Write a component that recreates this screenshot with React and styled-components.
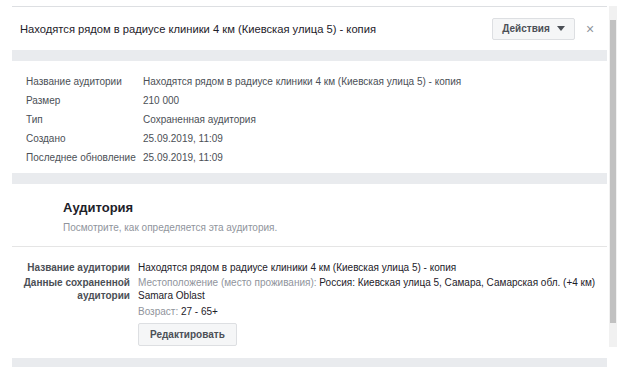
import React from "react";
import styled, { createGlobalStyle } from "styled-components";

const Global = createGlobalStyle`
  html, body { margin: 0; padding: 0; background: #fff; }
  body { font-family: "Liberation Sans", Arial, sans-serif; color: #1d2129; }
`;

const Page = styled.div`
  display: flex;
  align-items: flex-start;
  padding: 6px 0 0 12px;
`;

const Modal = styled.div`
  width: 595px;
  background: #e9ebee;
  border-top: 1px solid #dddfe2;
  display: flex;
  flex-direction: column;
  gap: 11px;
  padding-bottom: 9px;
`;

const Header = styled.div`
  height: 43px;
  background: #fff;
  display: flex;
  align-items: center;
  padding: 0 11px 0 8px;
  gap: 11px;
`;

const Title = styled.div`
  flex: 1;
  font-size: 11.2px;
  color: #1d2129;
  white-space: nowrap;
`;

const ActionButton = styled.button`
  height: 22px;
  width: 83px;
  padding: 0 8px;
  background: #f5f6f7;
  border: 1px solid #dddfe2;
  border-radius: 2px;
  font-family: inherit;
  font-weight: bold;
  font-size: 10px;
  color: #4b4f56;
  display: flex;
  align-items: center;
  justify-content: center;
  gap: 7px;
`;

const Close = styled.span`
  font-size: 14px;
  color: #90949c;
  width: 10px;
  line-height: 1;
`;

const Card = styled.div`
  background: #fff;
`;

const InfoTable = styled.div`
  display: grid;
  grid-template-columns: 117px 1fr;
  padding: 11px 14px 6px;
  font-size: 10px;
  line-height: 19px;
  color: #4b4f56;
`;

const AudHead = styled.div`
  padding: 16px 51px 0;
  height: 46px;
  border-bottom: 1px solid #e5e5e5;
`;

const AudTitle = styled.div`
  font-weight: bold;
  font-size: 13px;
  color: #1d2129;
  line-height: 16px;
`;

const AudSub = styled.div`
  font-size: 10px;
  color: #90949c;
  margin-top: 6px;
`;

const DetailGrid = styled.div`
  display: grid;
  grid-template-columns: 118px 1fr;
  column-gap: 8px;
  padding: 14px 0 10px;
  font-size: 10px;
  line-height: 13px;
`;

const DLabel = styled.div`
  text-align: right;
  font-weight: bold;
  color: #4b4f56;
  margin-bottom: 2px;
`;

const DValue = styled.div`
  color: #1d2129;
  margin-bottom: 2px;
`;

const Muted = styled.span`
  color: #90949c;
`;

const Line = styled.div`
  margin-top: ${(p) => p.$mt || 0}px;
  white-space: nowrap;
`;

const EditButton = styled.button`
  margin-top: 5px;
  height: 23px;
  padding: 0 11px;
  background: #f5f6f7;
  border: 1px solid #dddfe2;
  border-radius: 2px;
  font-family: inherit;
  font-weight: bold;
  font-size: 10px;
  color: #4b4f56;
`;

const Scrollbar = styled.div`
  margin-left: 2px;
  width: 8px;
  height: 341px;
  background: #f1f1f1;
  display: flex;
  flex-direction: column;
  align-items: center;
  padding-top: 14px;
  box-sizing: border-box;
`;

const Thumb = styled.div`
  width: 6px;
  height: 303px;
  background: #c1c1c1;
`;

const title = "Находятся рядом в радиусе клиники 4 км (Киевская улица 5) - копия";

const info = [
  ["Название аудитории", title],
  ["Размер", "210 000"],
  ["Тип", "Сохраненная аудитория"],
  ["Создано", "25.09.2019, 11:09"],
  ["Последнее обновление", "25.09.2019, 11:09"],
];

export default function App() {
  return (
    <>
      <Global />
      <Page>
        <Modal>
          <Header>
            <Title>{title}</Title>
            <ActionButton>
              Действия
              <svg width="8" height="5" viewBox="0 0 8 5">
                <path d="M0 0h8L4 5z" fill="#4b4f56" />
              </svg>
            </ActionButton>
            <Close>×</Close>
          </Header>
          <Card>
            <InfoTable>
              {info.map(([k, v]) => (
                <React.Fragment key={k}>
                  <div>{k}</div>
                  <div>{v}</div>
                </React.Fragment>
              ))}
            </InfoTable>
          </Card>
          <Card>
            <AudHead>
              <AudTitle>Аудитория</AudTitle>
              <AudSub>Посмотрите, как определяется эта аудитория.</AudSub>
            </AudHead>
            <DetailGrid>
              <DLabel>Название аудитории</DLabel>
              <DValue>{title}</DValue>
              <DLabel>
                Данные сохраненной
                <br />
                аудитории
              </DLabel>
              <DValue>
                <Line>
                  <Muted>Местоположение (место проживания): </Muted>
                  <span>Россия: Киевская улица 5, Самара, Самарская обл. (+4 км)</span>
                </Line>
                <Line>Samara Oblast</Line>
                <Line $mt={3}>
                  <Muted>Возраст: </Muted>27 - 65+
                </Line>
                <EditButton>Редактировать</EditButton>
              </DValue>
            </DetailGrid>
          </Card>
        </Modal>
        <Scrollbar>
          <Thumb />
        </Scrollbar>
      </Page>
    </>
  );
}
